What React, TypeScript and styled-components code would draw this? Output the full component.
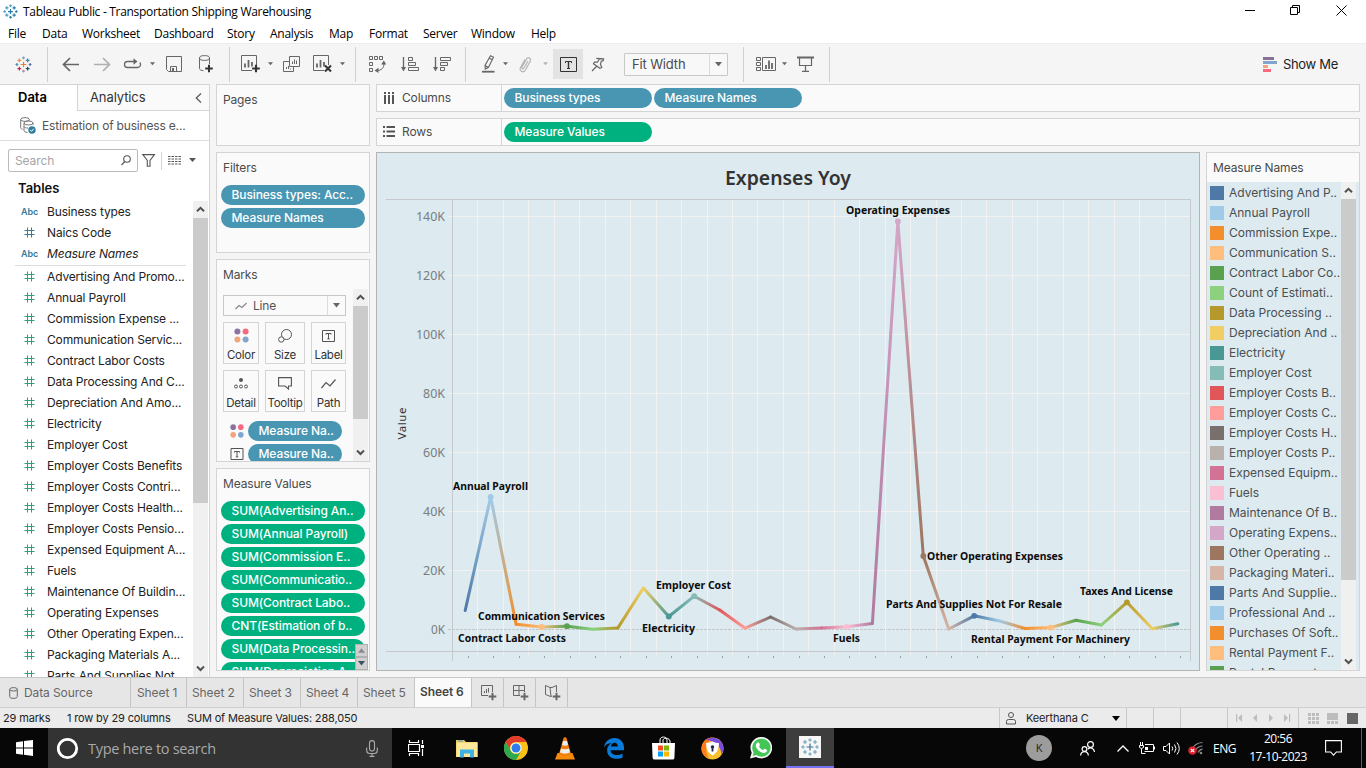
import React from "react";
import styled, { createGlobalStyle, css } from "styled-components";

const UI = `"Inter", "Liberation Sans", sans-serif`;
const WIN = `"Open Sans", "Noto Sans", sans-serif`;

const Global = createGlobalStyle`
  * { box-sizing: border-box; }
  body { margin: 0; background: #f5f5f5; overflow: hidden; }
  svg { display: block; flex: none; }
`;

const Page = styled.div`
  width: 1366px;
  height: 768px;
  display: flex;
  flex-direction: column;
  overflow: hidden;
  font-family: ${UI};
  font-size: 12px;
  color: #333;
  white-space: nowrap;
`;

/* ---------- window chrome ---------- */
const TitleBar = styled.header`
  height: 22px;
  background: #fff;
  display: flex;
  align-items: center;
  padding: 0 19px 0 3px;
  font: 12px/20px ${WIN};
  color: #000;
`;
const TitleText = styled.span`
  margin-left: 5px;
  letter-spacing: -0.3px;
  padding-top: 1px;
`;
const WindowButtons = styled.div`
  margin-left: auto;
  padding-bottom: 1px;
  display: flex;
  gap: 35px;
`;
const MenuBar = styled.nav`
  height: 21px;
  background: #fff;
  display: flex;
  font: 12px/23px ${WIN};
  color: #000;
  padding-left: 8px;
`;
const MenuItem = styled.span<{ $w: number }>`
  width: ${(p) => p.$w}px;
  letter-spacing: -0.25px;
`;

/* ---------- toolbar ---------- */
const Toolbar = styled.div`
  height: 41px;
  background: #f5f5f5;
  border-top: 1px solid #ececec;
  display: flex;
  align-items: center;
  padding-left: 15px;
`;
const Tool = styled.div<{ $w: number; $ml?: number; $on?: boolean }>`
  width: ${(p) => p.$w}px;
  height: 30px;
  margin-left: ${(p) => p.$ml ?? 0}px;
  display: flex;
  align-items: center;
  justify-content: center;
  background: ${(p) => (p.$on ? "#e3e3e3" : "none")};
`;
const ToolSep = styled.i<{ $ml: number }>`
  width: 1px;
  height: 35px;
  background: #d0d0d0;
  margin-left: ${(p) => p.$ml}px;
`;
const FitBox = styled.div`
  width: 104px;
  height: 23px;
  margin-left: 19px;
  border: 1px solid #c8c8c8;
  border-radius: 1px;
  display: flex;
  background: #f8f8f8;
  color: #4a4a4a;
  font-size: 13px;
  line-height: 20px;
  letter-spacing: -0.15px;
`;
const FitLabel = styled.span`
  flex: 1;
  padding-left: 7px;
`;
const CaretCell = styled.span<{ $w: number }>`
  width: ${(p) => p.$w}px;
  border-left: 1px solid #dcdcdc;
  display: flex;
  align-items: center;
  justify-content: center;
`;
const ShowMe = styled.div`
  margin-left: auto;
  margin-right: 28px;
  display: flex;
  align-items: center;
  gap: 6px;
  font-size: 13px;
  letter-spacing: -0.3px;
  color: #222;
`;

/* ---------- workspace ---------- */
const Workspace = styled.div`
  height: 593px;
  display: flex;
  background: #f5f5f5;
`;
const DataPane = styled.aside`
  width: 210px;
  background: #fff;
  border-right: 1px solid #d4d4d4;
  border-top: 1px solid #d4d4d4;
  display: flex;
  flex-direction: column;
`;
const PaneTabs = styled.div`
  height: 26px;
  display: flex;
  font-size: 13px;
  line-height: 25px;
`;
const DataTab = styled.b`
  width: 77px;
  padding-left: 18px;
  color: #000;
  font-weight: 600;
`;
const AnalyticsTab = styled.div`
  flex: 1;
  border-left: 1px solid #d4d4d4;
  border-bottom: 1px solid #d4d4d4;
  background: #fafafa;
  padding: 0 7px 0 12px;
  letter-spacing: -0.1px;
  display: flex;
  justify-content: space-between;
  align-items: center;
`;
const SourceRow = styled.div`
  height: 30px;
  border-bottom: 1px solid #dedede;
  display: flex;
  align-items: center;
  padding: 0 0 1px 20px;
  gap: 6px;
  color: #555;
  font-size: 12px;
  letter-spacing: -0.18px;
`;
const SearchRow = styled.div`
  display: flex;
  align-items: center;
  margin: 8px 0 0 8px;
  height: 23px;
`;
const SearchBox = styled.div`
  width: 130px;
  height: 23px;
  border: 1px solid #bbb;
  border-radius: 2px;
  display: flex;
  align-items: center;
  justify-content: space-between;
  padding: 0 6px;
  color: #a5a5a5;
  font-size: 12px;
  letter-spacing: -0.1px;
`;
const SmallSep = styled.i`
  width: 1px;
  height: 18px;
  background: #d4d4d4;
  margin: 0 6px 0 5px;
`;
const TablesHead = styled.h3`
  margin: 6px 0 3px 18px;
  font-size: 13px;
  line-height: 20px;
  font-weight: 600;
  color: #111;
`;
const ListArea = styled.div`
  flex: 1;
  min-height: 0;
  display: flex;
  justify-content: space-between;
`;
const FieldList = styled.div`
  width: 190px;
  overflow: hidden;
  padding-left: 16px;
`;
const Field = styled.div<{ $italic?: boolean }>`
  height: 21px;
  line-height: 20px;
  display: flex;
  align-items: center;
  font-size: 12px;
  letter-spacing: -0.15px;
  color: #222;
  font-style: ${(p) => (p.$italic ? "italic" : "normal")};
`;
const FieldIcon = styled.span<{ $c: string; $pl?: number }>`
  width: 31px;
  padding-left: ${(p) => p.$pl ?? 8}px;
  color: ${(p) => p.$c};
  font-size: 9px;
  font-weight: 600;
  font-style: normal;
  letter-spacing: -0.1px;
`;
const ListRule = styled.i`
  display: block;
  height: 1px;
  background: #dcdcdc;
  margin: 1px 4px 0 -1px;
`;
const Scroll = styled.div`
  width: 15px;
  margin-right: 1px;
  background: #f0f0f0;
  display: flex;
  flex-direction: column;
  align-items: center;
  flex: none;
`;
const ScrollEnd = styled.span`
  height: 17px;
  display: flex;
  align-items: center;
`;
const Thumb = styled.i<{ $h: number }>`
  height: ${(p) => p.$h}px;
  width: 15px;
  background: #cbcbcb;
  margin-bottom: auto;
`;

/* ---------- cards ---------- */
const Cards = styled.section`
  width: 154px;
  margin-left: 6px;
  display: flex;
  flex-direction: column;
  gap: 6px;
`;
const Card = styled.div<{ $h: number }>`
  height: ${(p) => p.$h}px;
  border: 1px solid #d4d4d4;
  background: #fafafa;
  overflow: hidden;
  position: relative;
`;
const CardTitle = styled.div`
  padding: 5px 0 0 6px;
  line-height: 20px;
  height: 32px;
  font-size: 12px;
  color: #4b4b4b;
  letter-spacing: -0.15px;
`;
const PillStack = styled.div`
  display: flex;
  flex-direction: column;
  gap: 3px;
  padding: 0 4px;
`;
const Pill = styled.div<{ $green?: boolean; $w?: number }>`
  width: ${(p) => (p.$w ? p.$w + "px" : "auto")};
  height: 20px;
  flex: none;
  border-radius: 10px;
  background: ${(p) => (p.$green ? "#00b180" : "#4996b2")};
  color: #fff;
  font-size: 12px;
  line-height: 19px;
  font-weight: 500;
  padding-left: 10.5px;
  letter-spacing: -0.1px;
  overflow: hidden;
`;
const MarksBody = styled.div`
  display: flex;
  justify-content: space-between;
  height: 172px;
  margin-top: -3px;
`;
const MarksMain = styled.div`
  padding: 6px 0 0 6px;
  width: 130px;
`;
const MarkType = styled.div`
  height: 21px;
  width: 123px;
  border: 1px solid #c8c8c8;
  display: flex;
  color: #555;
  line-height: 20px;
  letter-spacing: -0.2px;
`;
const MarkTypeLabel = styled.span`
  flex: 1;
  display: flex;
  align-items: center;
  padding-left: 11px;
  gap: 6px;
`;
const MarkGrid = styled.div`
  display: grid;
  grid-template-columns: 36px 40px 35px;
  gap: 6px;
  margin-top: 6px;
`;
const MarkButton = styled.div`
  height: 42px;
  border: 1px solid #d4d4d4;
  display: flex;
  flex-direction: column;
  align-items: center;
  font-size: 11.5px;
  line-height: 14px;
  letter-spacing: -0.25px;
  color: #333;
`;
const MarkIcon = styled.span`
  height: 25px;
  display: flex;
  align-items: center;
`;
const MarkPills = styled.div`
  margin-top: 9px;
  padding-left: 7px;
  display: flex;
  flex-direction: column;
  gap: 3px;
`;
const MarkPillRow = styled.div`
  display: flex;
  align-items: center;
  gap: 4px;
`;
const Spinner = styled.div`
  position: absolute;
  right: 1px;
  bottom: 0;
  width: 13px;
`;
const SpinButton = styled.span`
  height: 13px;
  background: #d0d0d0;
  border: 1px solid #b0b0b0;
  display: flex;
  align-items: center;
  justify-content: center;
`;

/* ---------- shelves, sheet and legend ---------- */
const Center = styled.main`
  width: 984px;
  margin-left: 6px;
  display: flex;
  flex-direction: column;
  gap: 6px;
`;
const Shelf = styled.div`
  height: 28px;
  border: 1px solid #d4d4d4;
  background: #fafafa;
  display: flex;
  align-items: center;
`;
const ShelfName = styled.div`
  width: 125px;
  height: 100%;
  border-right: 1px solid #d4d4d4;
  display: flex;
  align-items: center;
  gap: 6px;
  padding: 0 0 1px 6px;
  margin-right: 2px;
  color: #4b4b4b;
  letter-spacing: -0.15px;
`;
const ShelfPill = styled(Pill)`
  margin-right: 2px;
`;
const SheetRow = styled.div`
  display: flex;
  gap: 6px;
  height: 519px;
`;
const Sheet = styled.div`
  width: 824px;
  border: 1px solid #b4b4b4;
  background: #ddeaef;
`;
const Legend = styled.div`
  width: 154px;
  border: 1px solid #d4d4d4;
  background: #ddeaef;
  display: flex;
  flex-direction: column;
`;
const LegendTitle = styled.div`
  height: 29px;
  background: #fafafa;
  line-height: 30px;
  padding-left: 6px;
  letter-spacing: -0.15px;
  color: #4b4b4b;
`;
const LegendBody = styled.div`
  flex: 1;
  min-height: 0;
  display: flex;
  justify-content: space-between;
  padding-right: 2px;
`;
const LegendList = styled.div`
  overflow: hidden;
  padding: 1px 0 0 3px;
`;
const LegendItem = styled.div`
  height: 20px;
  display: flex;
  align-items: center;
  gap: 5px;
  line-height: 20px;
  color: #4a4f52;
`;
const Swatch = styled.i<{ $c: string }>`
  width: 14px;
  height: 14px;
  margin-bottom: 1px;
  flex: none;
  background: ${(p) => p.$c};
`;

/* ---------- bottom bars ---------- */
const TabBar = styled.div`
  height: 30px;
  border-top: 1px solid #c8c8c8;
  background: #e6e6e6;
  display: flex;
  color: #666;
  letter-spacing: -0.1px;
`;
const SheetTab = styled.div<{ $w: number; $active?: boolean; $pl?: number }>`
  width: ${(p) => p.$w}px;
  border-right: 1px solid #c4c4c4;
  display: flex;
  align-items: center;
  gap: 6px;
  padding-left: ${(p) => p.$pl ?? 6}px;
  ${(p) =>
    p.$active &&
    css`
      background: #fafafa;
      color: #444;
      font-weight: 600;
      letter-spacing: -0.1px;
      padding-bottom: 2px;
    `}
`;
const StatusBar = styled.div`
  height: 21px;
  border-top: 1px solid #d0d0d0;
  background: #ebebeb;
  display: flex;
  align-items: center;
  font-size: 11px;
  color: #222;
  letter-spacing: -0.15px;
  padding-left: 3px;
`;
const StatusText = styled.span<{ $w: number }>`
  width: ${(p) => p.$w}px;
`;
const StatusCell = styled.div<{ $w: number }>`
  width: ${(p) => p.$w}px;
  height: 20px;
  border-left: 1px solid #c8c8c8;
  display: flex;
  align-items: center;
  justify-content: space-evenly;
`;
const UserCell = styled(StatusCell)`
  margin-left: auto;
  justify-content: flex-start;
  padding-left: 6px;
  gap: 10px;
`;
const UserName = styled.span`
  width: 76px;
`;

const Taskbar = styled.footer`
  height: 40px;
  background: #070707;
  display: flex;
  font-family: ${WIN};
  color: #fff;
`;
const TaskCell = styled.div<{ $w?: number; $active?: boolean }>`
  width: ${(p) => p.$w ?? 48}px;
  margin-right: ${(p) => (p.$w ? 0 : 1)}px;
  height: 40px;
  display: flex;
  align-items: center;
  justify-content: center;
  background: ${(p) => (p.$active ? "#3d3d3d" : "none")};
  border-bottom: ${(p) => (p.$active ? "2px solid #7472f0" : "none")};
`;
const SearchField = styled.div`
  width: 344px;
  background: #333;
  display: flex;
  align-items: center;
  padding: 0 14px 0 8px;
  font-size: 14.5px;
  color: #a9a9a9;
  gap: 9px;
`;
const SearchHint = styled.span`
  flex: 1;
  letter-spacing: -0.3px;
`;
const Tray = styled.div`
  margin-left: auto;
  display: flex;
  align-items: center;
  font-size: 12px;
`;
const Avatar = styled.span`
  width: 26px;
  height: 26px;
  border-radius: 50%;
  background: #9c9c9c;
  color: #222;
  font-size: 11px;
  line-height: 26px;
  text-align: center;
  margin-right: 10px;
`;
const TrayItem = styled.span<{ $w: number }>`
  width: ${(p) => p.$w}px;
  display: flex;
  justify-content: center;
  letter-spacing: -0.5px;
`;
const Clock = styled.span`
  width: 74px;
  text-align: center;
  line-height: 18px;
  letter-spacing: -0.5px;
  margin-right: 10px;
`;
const DesktopEdge = styled.i`
  width: 1px;
  height: 40px;
  background: #5a5a5a;
  margin: 0 4px 0 19px;
`;

/* ---------- icons ---------- */
const Caret = ({ c = "#666", s = 6 }: { c?: string; s?: number }) => (
  <svg width={s} height={s / 2 + 1} viewBox="0 0 8 5">
    <path d="M0 0h8L4 5z" fill={c} />
  </svg>
);

const Chevron = ({ up }: { up?: boolean }) => (
  <svg width="9" height="7" viewBox="0 0 9 7" fill="none" stroke="#505050" strokeWidth="2">
    <path d={up ? "M1 5.3 4.5 1.8 8 5.3" : "M1 1.5 4.5 5 8 1.5"} />
  </svg>
);

const plus = (x: number, y: number, r: number) => `M${x - r} ${y}h${2 * r}M${x} ${y - r}v${2 * r}`;

const TableauMark = ({ size, colors, w = 1.2 }: { size: number; colors: string[]; w?: number }) => {
  const pts: [number, number, number][] = [
    [9, 9, 3], [9, 2, 1.5], [9, 16, 1.5], [2, 9, 1.5], [16, 9, 1.5],
    [4.6, 4.6, 2], [13.4, 4.6, 2], [4.6, 13.4, 2], [13.4, 13.4, 2],
  ];
  return (
    <svg width={size} height={size} viewBox="0 0 18 18" fill="none" strokeWidth={w}>
      {pts.map(([x, y, r], i) => (
        <path key={i} d={plus(x, y, r)} stroke={colors[i % colors.length]} />
      ))}
    </svg>
  );
};

const Hash = () => (
  <svg width="11" height="11" viewBox="0 0 11 11" fill="none" stroke="currentColor" strokeWidth="1">
    <path d="M3.5 .5v10M7.500 .5v10M.5 3.500h10M.5 7.500h10" />
  </svg>
);

const FourDots = ({ s = 15 }: { s?: number }) => (
  <svg width={s} height={s} viewBox="0 0 15 15">
    <circle cx="3.4" cy="3.4" r="3" fill="#8a73a0" />
    <circle cx="11.6" cy="3.4" r="3" fill="#f8697f" />
    <circle cx="3.4" cy="11.6" r="3" fill="#f2a57c" />
    <circle cx="11.6" cy="11.6" r="3" fill="#82a5cd" />
  </svg>
);

const BoxedT = ({ w = 13, h = 12, c = "#555" }: { w?: number; h?: number; c?: string }) => (
  <svg width={w} height={h} viewBox="0 0 13 12" fill="none" stroke={c}>
    <path d="M.5 .5h12v11H.5zM4 4.6V3.5h5v1.1M6.5 3.5v5.5M5.3 8.9h2.4" />
  </svg>
);

const BoxedTLarge = () => (
  <svg width="17" height="15" viewBox="0 0 17 15" fill="none" stroke="#333">
    <path d="M.5 .5h16v14H.5zM5.5 6V4.5h6V6M7 11.5h3" />
    <path d="M8.5 4.5v7" strokeWidth="1.4" />
  </svg>
);

const G = "#666";
const Arrow = ({ c, flip }: { c: string; flip?: boolean }) => (
  <svg width="17" height="15" viewBox="0 0 17 15" fill="none" stroke={c} strokeWidth="1.7">
    <path d={flip ? "M0 7.5h15M9 1l6.5 6.5L9 14" : "M17 7.5H2M8 1 1.5 7.5 8 14"} />
  </svg>
);
const Replay = () => (
  <svg width="19" height="12" viewBox="0 0 19 12" fill="none" stroke={G} strokeWidth="1.3">
    <path d="M12 3.500H4.500a3 3 0 0 0 0 6h10a3 3 0 0 0 2.300-5" />
    <path d="M10.500 .3L14.500 3.500l-4 3.200z" fill={G} stroke="none" />
  </svg>
);
const Save = () => (
  <svg width="16" height="16" viewBox="0 0 16 16" fill="none" stroke={G}>
    <path d="M.5 .5h15v15H2.5l-2-2zM4.5 15v-4.5h6V15" />
    <path d="M6 12h2v3.5H6z" fill={G} stroke="none" />
  </svg>
);
const NewData = () => (
  <svg width="16" height="18" viewBox="0 0 16 18" fill="none" stroke={G}>
    <ellipse cx="6.5" cy="3" rx="5" ry="2.4" />
    <path d="M1.5 3v10.5c0 1.2 1.5 2 4 2.2M11.5 3v6" />
    <path d={plus(11, 13.5, 3.8)} stroke="#333" strokeWidth="2" />
  </svg>
);
const ChartIcon = ({ mode }: { mode: "add" | "clear" }) => (
  <svg width="20" height="18" viewBox="0 0 20 18" fill="none" stroke={G}>
    <path d="M11 15.500H.5V.5h15V10" />
    <path d="M4 8.500v4M7.500 5v7.500M11 7v4.500" strokeWidth="1.8" />
    <path d={mode === "add" ? plus(15, 13.5, 3.8) : "M12 10.500l6 6M18 10.500l-6 6"} stroke="#333" strokeWidth="2.1" />
  </svg>
);
const Duplicate = () => (
  <svg width="17" height="16" viewBox="0 0 17 16" fill="none" stroke={G}>
    <path d="M6.500 .5h10v10h-10zM6.500 5.500h-6v10h10v-5M9.500 8V5.500M11.500 8V3.500M13.500 8V4.500M3.500 13v-2M5.500 13v-3M7.500 13.500v-1" />
  </svg>
);
const Swap = () => (
  <svg width="17" height="17" viewBox="0 0 17 17" fill="none" stroke={G}>
    <path d="M.5 .5h3v3h-3zM5.500 .5h3v3h-3zM10.500 .5h3v3h-3zM.5 6.500h3v3h-3zM.5 12.500h3v3h-3z" />
    <path d="M8 14.500c4.500 0 7-2.500 7-7" />
    <path d="M5.500 14.500l4-2.700v5.200zM14.800 4.500l2.600 4h-5.300z" fill={G} stroke="none" />
  </svg>
);
const Sort = ({ desc }: { desc?: boolean }) => (
  <svg width="18" height="15" viewBox="0 0 18 15" fill="none" stroke={G}>
    <path d="M2.500 0v12" strokeWidth="1.3" />
    <path d="M0 10h5l-2.500 4.500z" fill={G} stroke="none" />
    <path d={desc ? "M7.500 .5h10v3h-10zM7.500 5.500h7v3h-7zM7.500 10.500h4v3h-4z" : "M7.500 .5h4v3h-4zM7.500 5.500h7v3h-7zM7.500 10.500h10v3h-10z"} />
  </svg>
);
const Highlighter = () => (
  <svg width="13" height="18" viewBox="0 0 13 18" fill="none" stroke={G}>
    <path d="M8.500 .8l3 1.500-5 10-3.200 1.800-.3-3.700zM3 10.400l3.500 2M7.400 3.200l3 1.500" strokeWidth="1.1" />
    <path d="M0 16.700h12.500" strokeWidth="1.8" />
  </svg>
);
const Clip = () => (
  <svg width="13" height="17" viewBox="0 0 13 17" fill="none" stroke="#b4b4b4" strokeWidth="1.2">
    <path d="M9 5l-4 7c-.8 1.500-2.800.5-2-1L7.500 3c1.300-2.200 5-.8 3.800 2L6.500 14c-2 3.500-6.800 1-5-2.500L6 3.500" />
  </svg>
);
const PinIcon = () => (
  <svg width="14" height="15" viewBox="0 0 14 15" fill="none" stroke={G} strokeWidth="1.200">
    <path d="M5.300 1.400l7.200.4-.3 1.900-2 .5-.7 3.300 1.300 2.900-1.900.9L2.500 6.700l.9-1.700 3 .2 2-3.200M5.400 9.500L1 14" />
  </svg>
);
const ShowCards = () => (
  <svg width="20" height="15" viewBox="0 0 20 15" fill="none" stroke={G}>
    <path d="M.5 .5h4v3h-4zM.5 5.500h4v3h-4zM.5 10.500h4v3h-4zM6.500 .5h13v13h-13z" />
    <path d="M10 12V8M13 12V3.500M16 12V6" strokeWidth="1.8" />
  </svg>
);
const Present = () => (
  <svg width="17" height="16" viewBox="0 0 17 16" fill="none" stroke={G} strokeWidth="1.2">
    <path d="M0 1.500h17" strokeWidth="2" />
    <path d="M2.500 2v7.500h12V2M8.500 9.500V15M5 15.300h7" />
  </svg>
);
const ShowMeIcon = () => (
  <svg width="14" height="15" viewBox="0 0 14 15">
    <path d="M0 0h11v3H0z" fill="#8a6f99" />
    <path d="M0 4h14v3H0z" fill="#82a5cd" />
    <path d="M0 8h5v3H0z" fill="#f2a57c" />
    <path d="M0 12h8v3H0z" fill="#f8697f" />
  </svg>
);
const SourceIcon = () => (
  <svg width="16" height="17" viewBox="0 0 16 17" fill="none" stroke="#777">
    <ellipse cx="5" cy="2.500" rx="4.300" ry="1.900" />
    <path d="M.7 2.500v8c0 1 1 1.600 2 1.900M9.300 2.500v1" />
    <ellipse cx="8.500" cy="6" rx="4.500" ry="2" />
    <path d="M4 6v7.500c0 1 1.200 1.800 3.500 2M13 6v2M4 9.500c.5 1 1.800 1.500 4 1.600" />
    <circle cx="12" cy="13" r="3.700" fill="#2f7e9f" stroke="none" />
    <path d="M10.300 13l1.200 1.300 2.200-2.500" stroke="#fff" />
  </svg>
);
const Cylinder = () => (
  <svg width="9" height="12" viewBox="0 0 9 12" fill="none" stroke="#666">
    <ellipse cx="4.500" cy="2.300" rx="3.800" ry="1.700" />
    <path d="M.7 2.300v7.300c0 1.100 1.500 1.800 3.800 1.800s3.800-.7 3.800-1.800V2.300" />
  </svg>
);
const TabAdd = ({ d }: { d: string }) => (
  <svg width="16" height="16" viewBox="0 0 16 16" fill="none" stroke={G}>
    <path d={d} />
    <path d={plus(11.500, 11.500, 3.800)} strokeWidth="1.900" />
  </svg>
);

/* ---------- chart ---------- */
const palette = [
  "#4e79a7", "#a0cbe8", "#f28e2b", "#ffbe7d", "#59a14f", "#8cd17d", "#b6992d", "#f1ce63", "#499894", "#86bcb6",
  "#e15759", "#ff9d9a", "#79706e", "#bab0ac", "#d37295", "#fabfd2", "#b07aa1", "#d4a6c8", "#9d7660", "#d7b5a6",
];
const heights = [
  610.5, 497, 624.3, 626.9, 626.2, 629.3, 627.9, 588, 616.5, 596.2, 610, 628.2, 617, 629, 628, 626.8, 623.5, 221.4,
  556, 629, 615.8, 621, 628.5, 627.6, 620.3, 625, 602.3, 628.7, 623.8,
];
const step = 25.45;
const px = (i: number) => 465.2 + step * i;
const marked = [1, 3, 4, 8, 9, 15, 17, 18, 20, 23, 26];
const labels: [string, number, number, number][] = [
  ["Operating Expenses", 846, 214, 104],
  ["Annual Payroll", 453, 490, 75],
  ["Communication Services", 478, 620, 127],
  ["Contract Labor Costs", 458, 642, 108],
  ["Employer Cost", 656, 589, 75],
  ["Electricity", 642, 632, 53],
  ["Fuels", 833, 642, 27],
  ["Other Operating Expenses", 927, 560, 136],
  ["Parts And Supplies Not For Resale", 886, 608, 176],
  ["Rental Payment For Machinery", 971, 643, 159],
  ["Taxes And License", 1080, 595, 93],
];

const Chart = () => (
  <svg width="822" height="517" viewBox="377 153 822 517" fontFamily={`"Noto Sans", "Open Sans", sans-serif`}>
    <g shapeRendering="crispEdges" fill="none">
      {[0, 1, 2, 3, 4, 5, 6, 7].map((k) => (
        <path key={k} d={`M448 ${629.5 - k * 59}H1190`} stroke={k ? "#f3f1f1" : "#c4c8ca"} strokeDasharray={k ? undefined : "3 1"} />
      ))}
      {Array.from({ length: 28 }, (_, k) => (
        <path key={k} d={`M${Math.floor(452.5 + step * (k + 1)) + 0.5} 200V655`} stroke="#f3f1f1" />
      ))}
      <path d="M386 199.500H1191M386 651.500H1191M452.500 199V661M1190.500 199V661" stroke="#c6c9cb" />
      {heights.map((_, i) => (
        <path key={i} d={`M${Math.floor(px(i) + 3) + 0.5} 656v2`} stroke="#9a9fa2" />
      ))}
    </g>
    <text x="725" y="185" fontSize="19.500" fontWeight="600" fill="#333" textLength="126" lengthAdjust="spacingAndGlyphs">Expenses Yoy</text>
    <g fontSize="12.500" fill="#787d80">
      {[0, 1, 2, 3, 4, 5, 6, 7].map((k) => {
        const w = k > 4 ? 29 : k ? 22 : 14;
        return (
          <text key={k} x={445 - w} y={634 - k * 59} textLength={w} lengthAdjust="spacingAndGlyphs">{k * 20}K</text>
        );
      })}
    </g>
    <text transform="translate(405.500 439.500) rotate(-90)" fontSize="11.500" fill="#333" textLength="32">Value</text>
    <defs>
      {heights.slice(1).map((y, i) => (
        <linearGradient key={i} id={`seg${i}`} gradientUnits="userSpaceOnUse" x1={px(i)} y1={heights[i]} x2={px(i + 1)} y2={y}>
          <stop offset="0" stopColor={palette[i % 20]} />
          <stop offset="1" stopColor={palette[(i + 1) % 20]} />
        </linearGradient>
      ))}
    </defs>
    {heights.slice(1).map((y, i) => (
      <path key={i} d={`M${px(i)} ${heights[i]}L${px(i + 1)} ${y}`} stroke={`url(#seg${i})`} strokeWidth="3" strokeLinecap="round" />
    ))}
    {marked.map((i) => (
      <circle key={i} cx={px(i)} cy={heights[i]} r="2.900" fill={palette[i % 20]} />
    ))}
    <g fontSize="11" fontWeight="700" fill="#0c0c0c">
      {labels.map(([t, x, y, w]) => (
        <text key={t} x={x} y={y} textLength={w} lengthAdjust="spacingAndGlyphs">{t}</text>
      ))}
    </g>
  </svg>
);

/* ---------- content ---------- */
const measures = [
  "Advertising And Promo...", "Annual Payroll", "Commission Expense ...", "Communication Servic...", "Contract Labor Costs",
  "Data Processing And C...", "Depreciation And Amo...", "Electricity", "Employer Cost", "Employer Costs Benefits",
  "Employer Costs Contri...", "Employer Costs Health...", "Employer Costs Pensio...", "Expensed Equipment A...", "Fuels",
  "Maintenance Of Buildin...", "Operating Expenses", "Other Operating Expen...", "Packaging Materials A...", "Parts And Supplies Not ...",
];
const legend = [
  "Advertising And P..", "Annual Payroll", "Commission Expe..", "Communication S..", "Contract Labor Co..", "Count of Estimati..",
  "Data Processing ..", "Depreciation And ..", "Electricity", "Employer Cost", "Employer Costs B..", "Employer Costs C..",
  "Employer Costs H..", "Employer Costs P..", "Expensed Equipm..", "Fuels", "Maintenance Of B..", "Operating Expens..",
  "Other Operating ..", "Packaging Materi..", "Parts And Supplie..", "Professional And ..", "Purchases Of Soft..",
  "Rental Payment F..", "Rental Payment ..",
];
const menu: [string, number][] = [
  ["File", 34], ["Data", 40], ["Worksheet", 72], ["Dashboard", 73], ["Story", 43], ["Analysis", 59], ["Map", 40],
  ["Format", 54], ["Server", 48], ["Window", 60], ["Help", 40],
];
const values = [
  "SUM(Advertising An..", "SUM(Annual Payroll)", "SUM(Commission E..", "SUM(Communicatio..", "SUM(Contract Labo..",
  "CNT(Estimation of b..", "SUM(Data Processin..", "SUM(Depreciation A..",
];

const DataPanel = () => (
  <DataPane>
    <PaneTabs>
      <DataTab>Data</DataTab>
      <AnalyticsTab>
        Analytics
        <svg width="7" height="10" viewBox="0 0 7 10" fill="none" stroke="#555" strokeWidth="1.200"><path d="M6 .5L1.200 5 6 9.500" /></svg>
      </AnalyticsTab>
    </PaneTabs>
    <SourceRow><SourceIcon />Estimation of business e...</SourceRow>
    <SearchRow>
      <SearchBox>
        Search
        <svg width="10" height="11" viewBox="0 0 10 11" fill="none" stroke="#555" strokeWidth="1.100"><circle cx="6" cy="4" r="3.300" /><path d="M3.800 6.500L.5 10" /></svg>
      </SearchBox>
      <svg width="18" height="13" viewBox="-4 0 18 13" fill="none" stroke="#555" strokeWidth="1.100"><path d="M.8 .6h11.700L8 6.500v5.800H5.300V6.500z" /></svg>
      <SmallSep />
      <svg width="13" height="10" viewBox="0 0 13 10" stroke="#555" strokeDasharray="2.500 1"><path d="M0 .5h13M0 3h13M0 5.500h13M0 8h13" /></svg>
      <svg width="15" height="5" viewBox="-8 0 15 5"><path d="M0 0h7L3.500 4z" fill="#555" /></svg>
    </SearchRow>
    <TablesHead>Tables</TablesHead>
    <ListArea>
      <FieldList>
        <Field><FieldIcon $c="#3a7b9c" $pl={5}>Abc</FieldIcon>Business types</Field>
        <Field><FieldIcon $c="#3a7b9c"><Hash /></FieldIcon>Naics Code</Field>
        <Field $italic><FieldIcon $c="#3a7b9c" $pl={5}>Abc</FieldIcon>Measure Names</Field>
        <ListRule />
        {measures.map((m) => (
          <Field key={m}><FieldIcon $c="#2fa07a"><Hash /></FieldIcon>{m}</Field>
        ))}
      </FieldList>
      <Scroll><ScrollEnd><Chevron up /></ScrollEnd><Thumb $h={285} /><ScrollEnd><Chevron /></ScrollEnd></Scroll>
    </ListArea>
  </DataPane>
);

const MarksCard = () => (
  <Card $h={203}>
    <CardTitle>Marks</CardTitle>
    <MarksBody>
      <MarksMain>
        <MarkType>
          <MarkTypeLabel>
            <svg width="12" height="8" viewBox="0 0 12 8" fill="none" stroke="#888" strokeWidth="1.200"><path d="M.5 7L4 3.500l3 2L11.500 1" /></svg>
            Line
          </MarkTypeLabel>
          <CaretCell $w={18}><Caret s={7} /></CaretCell>
        </MarkType>
        <MarkGrid>
          <MarkButton><MarkIcon><FourDots /></MarkIcon>Color</MarkButton>
          <MarkButton>
            <MarkIcon><svg width="15" height="14" viewBox="0 0 15 14" fill="none" stroke="#555"><circle cx="8.500" cy="5.500" r="5" /><circle cx="3.300" cy="10.500" r="2.700" fill="#fafafa" /></svg></MarkIcon>
            Size
          </MarkButton>
          <MarkButton><MarkIcon><BoxedT /></MarkIcon>Label</MarkButton>
          <MarkButton>
            <MarkIcon><svg width="14" height="11" viewBox="0 0 14 11" fill="none" stroke="#555"><circle cx="7" cy="2" r="2" fill="#555" stroke="none" /><circle cx="2" cy="8.500" r="1.500" /><circle cx="7" cy="8.500" r="1.500" /><circle cx="12" cy="8.500" r="1.500" /></svg></MarkIcon>
            Detail
          </MarkButton>
          <MarkButton>
            <MarkIcon><svg width="14" height="13" viewBox="0 0 14 13" fill="none" stroke="#555" strokeWidth="1.100"><path d="M.6 .6h12.800v8.400h-2.900v3L7 9H.6z" /></svg></MarkIcon>
            Tooltip
          </MarkButton>
          <MarkButton>
            <MarkIcon><svg width="15" height="10" viewBox="0 0 15 10" fill="none" stroke="#555" strokeWidth="1.200"><path d="M.5 9L5 3.500 9 7l5.500-6.500" /></svg></MarkIcon>
            Path
          </MarkButton>
        </MarkGrid>
        <MarkPills>
          <MarkPillRow><FourDots s={14} /><Pill $w={94}>Measure Na..</Pill></MarkPillRow>
          <MarkPillRow><BoxedT w={14} /><Pill $w={94}>Measure Na..</Pill></MarkPillRow>
        </MarkPills>
      </MarksMain>
      <Scroll><ScrollEnd><Chevron up /></ScrollEnd><Thumb $h={113} /><ScrollEnd><Chevron /></ScrollEnd></Scroll>
    </MarksBody>
  </Card>
);

const TaskApps = () => (
  <>
    <TaskCell>
      <svg width="17" height="16" viewBox="0 0 17 16" fill="none" stroke="#fff"><path d="M1.500 0v2.500h9V0M1.500 16v-2.500h9V16M.5 4.500h11v7H.5zM14.500 0v4M14.500 9v7" strokeWidth="1.200" /><path d="M13 5h3v3h-3z" fill="#fff" stroke="none" /></svg>
    </TaskCell>
    <TaskCell $w={51}>
      <svg width="22" height="19" viewBox="0 0 22 19"><path d="M0 1h8l2 2h11.500v15H0z" fill="#f5c84c" /><path d="M.5 3.500h21V18H.5z" fill="#ffe79b" /><path d="M2 1.500h5v1H2z" fill="#3b9fd8" /><path d="M4 18.500v-8h14v8h-4v-4H8v4z" fill="#3eb4e6" /></svg>
    </TaskCell>
    <TaskCell>
      <svg width="24" height="24" viewBox="0 0 24 24"><circle cx="12" cy="12" r="12" fill="#fbc116" /><path d="M1.600 6A12 12 0 0 1 22.400 6H12a6 6 0 0 0-5.300 9z" fill="#e33b2e" /><path d="M1.600 6A12 12 0 0 0 12 24l5.200-9A6 6 0 0 1 6.800 15z" fill="#2da94f" /><circle cx="12" cy="12" r="5.600" fill="#fff" /><circle cx="12" cy="12" r="4.500" fill="#2f7de9" /></svg>
    </TaskCell>
    <TaskCell>
      <svg width="20" height="23" viewBox="0 0 20 23"><path d="M2.500 16h15l2.500 6.500H0z" fill="#f58a0b" /><path d="M10 0l1.500 1L16 17c-3 2-9 2-12 0L8.500 1z" fill="#f07d0c" /><path d="M8 4h4l1 4c-2 1-4 1-6 0zM6 11.500c2.500 1 5.500 1 8 0l1 4c-3 1.500-7 1.500-10 0z" fill="#eceef0" /></svg>
    </TaskCell>
    <TaskCell>
      <svg width="20" height="21" viewBox="0 0 20 21"><path d="M0 9.500C1 3.500 5 0 10.500 0 16.500 0 20 4.500 20 9.500v2.700H6.600c.2 5.200 7.400 6 12 3.200v4c-6 3.200-15.500 1.200-15.500-7.200 0-3.200 1.900-5.700 4.700-7.100C4 5.300 1.300 7 0 9.500zM6.800 8.400h7c0-4.900-6-4.600-7 0z" fill="#0a7ad9" fillRule="evenodd" /></svg>
    </TaskCell>
    <TaskCell>
      <svg width="23" height="24" viewBox="0 0 23 24"><path d="M8 7V4c0-4 7-4 7 0v3M11 7V4c0-2 6-3 7 1v2" fill="none" stroke="#fff" /><path d="M0 7h23l-.6 15q-.2 1.500-1.800 1.500H2.400Q.8 23.500.6 22z" fill="#fff" /><path d="M6 9.500h5v5H6z" fill="#f25022" /><path d="M12 9.500h5v5h-5z" fill="#7fba00" /><path d="M6 15.500h5v5H6z" fill="#00a4ef" /><path d="M12 15.500h5v5h-5z" fill="#ffb900" /></svg>
    </TaskCell>
    <TaskCell>
      <svg width="23" height="23" viewBox="0 0 23 23"><circle cx="11.500" cy="11.500" r="11" fill="#fbc02d" /><path d="M11 .5A11 11 0 0 0 3 18.500l5 3C3 14 5 6 11 .5z" fill="#ff7a1a" /><path d="M5 3C12-2 22 2 22.500 11c0 3-1 5-2 6.500C20 9 14 4 5 3z" fill="#7a4be0" /><path d="M11.500 4.500q3.500 1.500 6.500 1.500 0 9-6.500 12.500Q5 15 5 6q3 0 6.500-1.500z" fill="#fff" /><path d="M11.500 8.300a1.800 1.800 0 0 1 .9 3.300v3h-1.800v-3a1.800 1.800 0 0 1 .9-3.300z" fill="#26264a" /></svg>
    </TaskCell>
    <TaskCell>
      <svg width="22" height="22" viewBox="0 0 22 22"><path d="M11.300 0A10.700 10.700 0 1 1 6 19.900L0 21.500l1.700-5.800A10.700 10.700 0 0 1 11.300 0z" fill="#f4f7f4" /><path d="M11.300 1.700A9 9 0 1 1 6.300 18l-3.700 1 1-3.600a9 9 0 0 1 7.700-13.700z" fill="#43c656" /><path d="M7.400 5.700c1-.8 1.600-.2 2.400 2 .2.800-1 1.300-.7 1.800 1 1.900 2.200 2.800 3.900 3.500.7.200 1.100-1.500 1.700-1.300 2.600 1.200 2.800 1.300 2.200 2.600-.6 1.400-2.600 2-4.300 1.500-3.500-1-5.900-3.600-6.700-6.300-.4-1.600.3-3 1.500-3.800z" fill="#fff" /></svg>
    </TaskCell>
    <TaskCell $active>
      <svg width="22" height="22" viewBox="0 0 22 22"><path d="M0 0h22v22H0z" fill="#f6f6f6" /><path d={plus(11, 11, 3.500)} stroke="#3a7694" strokeWidth="1.200" /><path d={[plus(11, 4, 1.800), plus(11, 18, 1.800), plus(4, 11, 1.800), plus(18, 11, 1.800), plus(6, 6, 2), plus(16, 6, 2), plus(6, 16, 2), plus(16, 16, 2)].join("")} stroke="#6fa3bd" strokeWidth="1.100" /></svg>
    </TaskCell>
  </>
);

export default function App() {
  return (
    <Page>
      <Global />
      <TitleBar>
        <TableauMark size={15} colors={["#2a7ea8", "#4e9cc0"]} w={1.500} />
        <TitleText>Tableau Public - Transportation Shipping Warehousing</TitleText>
        <WindowButtons>
          <svg width="10" height="11" viewBox="0 0 10 11"><path d="M0 5.500h10" stroke="#000" /></svg>
          <svg width="11" height="11" viewBox="0 0 11 11" fill="none" stroke="#000"><path d="M.5 2.500h7v7h-7zM2.500 2.500V.5h7v7h-2" /></svg>
          <svg width="11" height="11" viewBox="0 0 11 11" stroke="#000"><path d="M.5 .5l10 10M10.500 .5l-10 10" /></svg>
        </WindowButtons>
      </TitleBar>
      <MenuBar>{menu.map(([t, w]) => <MenuItem key={t} $w={w}>{t}</MenuItem>)}</MenuBar>
      <Toolbar>
        <Tool $w={17}><TableauMark size={17} colors={["#e8803a", "#7aa0c4", "#a890a8", "#4f8da8", "#5b76a8", "#e8924c", "#3f87a0", "#c02c48", "#2b4778"]} w={1.300} /></Tool>
        <ToolSep $ml={15} />
        <Tool $w={18} $ml={13}><Arrow c={G} /></Tool>
        <Tool $w={18} $ml={14}><Arrow c="#b0b0b0" flip /></Tool>
        <Tool $w={19} $ml={12}><Replay /></Tool>
        <Tool $w={6} $ml={7}><Caret s={5} /></Tool>
        <Tool $w={16} $ml={11}><Save /></Tool>
        <Tool $w={16} $ml={16}><NewData /></Tool>
        <ToolSep $ml={15} />
        <Tool $w={20} $ml={11}><ChartIcon mode="add" /></Tool>
        <Tool $w={6} $ml={6}><Caret s={5} /></Tool>
        <Tool $w={17} $ml={10}><Duplicate /></Tool>
        <Tool $w={20} $ml={13}><ChartIcon mode="clear" /></Tool>
        <Tool $w={6} $ml={6}><Caret s={5} /></Tool>
        <ToolSep $ml={10} />
        <Tool $w={17} $ml={13}><Swap /></Tool>
        <Tool $w={18} $ml={15}><Sort /></Tool>
        <Tool $w={18} $ml={14}><Sort desc /></Tool>
        <ToolSep $ml={14} />
        <Tool $w={13} $ml={16}><Highlighter /></Tool>
        <Tool $w={6} $ml={7}><Caret s={5} /></Tool>
        <Tool $w={13} $ml={11}><Clip /></Tool>
        <Tool $w={6} $ml={10}><Caret s={5} c="#b4b4b4" /></Tool>
        <Tool $w={30} $ml={5} $on><BoxedTLarge /></Tool>
        <Tool $w={14} $ml={8}><PinIcon /></Tool>
        <FitBox><FitLabel>Fit Width</FitLabel><CaretCell $w={18}><Caret s={7} /></CaretCell></FitBox>
        <ToolSep $ml={15} />
        <Tool $w={20} $ml={12}><ShowCards /></Tool>
        <Tool $w={6} $ml={5}><Caret s={5} /></Tool>
        <Tool $w={17} $ml={10}><Present /></Tool>
        <ToolSep $ml={15} />
        <ShowMe><ShowMeIcon />Show Me</ShowMe>
      </Toolbar>

      <Workspace>
        <DataPanel />
        <Cards>
          <Card $h={62}><CardTitle>Pages</CardTitle></Card>
          <Card $h={101}>
            <CardTitle>Filters</CardTitle>
            <PillStack><Pill>Business types: Acc..</Pill><Pill>Measure Names</Pill></PillStack>
          </Card>
          <MarksCard />
          <Card $h={203}>
            <CardTitle>Measure Values</CardTitle>
            <PillStack>{values.map((v) => <Pill key={v} $green>{v}</Pill>)}</PillStack>
            <Spinner>
              <SpinButton><svg width="7" height="5" viewBox="0 0 8 5"><path d="M0 5h8L4 0z" fill="#888" /></svg></SpinButton>
              <SpinButton><Caret c="#3f4f63" s={7} /></SpinButton>
            </Spinner>
          </Card>
        </Cards>
        <Center>
          <Shelf>
            <ShelfName>
              <svg width="13" height="12" viewBox="0 0 13 12" stroke="#555" strokeWidth="2"><path d="M2 0v2M6 0v2M10 0v2M2 3v9M6 3v9M10 3v9" /></svg>
              Columns
            </ShelfName>
            <ShelfPill $w={148}>Business types</ShelfPill>
            <ShelfPill $w={148}>Measure Names</ShelfPill>
          </Shelf>
          <Shelf>
            <ShelfName>
              <svg width="13" height="11" viewBox="0 0 13 11" stroke="#555" strokeWidth="2"><path d="M0 1h2M0 5.500h2M0 10h2M3.500 1H12M3.500 5.500H12M3.500 10H12" /></svg>
              Rows
            </ShelfName>
            <ShelfPill $green $w={148}>Measure Values</ShelfPill>
          </Shelf>
          <SheetRow>
            <Sheet><Chart /></Sheet>
            <Legend>
              <LegendTitle>Measure Names</LegendTitle>
              <LegendBody>
                <LegendList>
                  {legend.map((t, i) => <LegendItem key={t}><Swatch $c={palette[i % 20]} />{t}</LegendItem>)}
                </LegendList>
                <Scroll><ScrollEnd><Chevron up /></ScrollEnd><Thumb $h={381} /><ScrollEnd><Chevron /></ScrollEnd></Scroll>
              </LegendBody>
            </Legend>
          </SheetRow>
        </Center>
      </Workspace>

      <TabBar>
        <SheetTab $w={131} $pl={9}><Cylinder />Data Source</SheetTab>
        <SheetTab $w={56}>Sheet 1</SheetTab>
        <SheetTab $w={57} $pl={5}>Sheet 2</SheetTab>
        <SheetTab $w={57} $pl={5}>Sheet 3</SheetTab>
        <SheetTab $w={57} $pl={5}>Sheet 4</SheetTab>
        <SheetTab $w={57} $pl={5}>Sheet 5</SheetTab>
        <SheetTab $w={57} $pl={5} $active>Sheet 6</SheetTab>
        <SheetTab $w={32} $pl={9}><TabAdd d="M7 10.500H.5V.5h11V7M3.500 8V6M5.500 8V4M7.500 7.500V3" /></SheetTab>
        <SheetTab $w={32} $pl={9}><TabAdd d="M7 10.500H.5V.5h11V7M6 .5v10M.5 5.500h11" /></SheetTab>
        <SheetTab $w={32} $pl={9}><TabAdd d="M7 11L5.500 11.500.5 9.500V.5L5 2.500 6 11.500M5 2.500h2L11.500.5V7" /></SheetTab>
      </TabBar>
      <StatusBar>
        <StatusText $w={64}>29 marks</StatusText>
        <StatusText $w={120}>1 row by 29 columns</StatusText>
        <StatusText $w={200}>SUM of Measure Values: 288,050</StatusText>
        <UserCell $w={127}>
          <svg width="10" height="13" viewBox="0 0 10 13" fill="none" stroke="#555"><circle cx="5" cy="3" r="2.500" /><path d="M.5 12V9.500q0-2 2-2h5q2 0 2 2V12z" /></svg>
          <UserName>Keerthana C</UserName>
          <Caret c="#000" s={8} />
        </UserCell>
        <StatusCell $w={27} />
        <StatusCell $w={27} />
        <StatusCell $w={47} />
        <StatusCell $w={71}>
          <svg width="55" height="8" viewBox="0 0 55 8" fill="#bdbdbd"><path d="M0 0h1.200v8H0zM6 0v8L2 4zM21 0v8l-4-4zM33 0l4 4-4 4zM48 0l4 4-4 4zM53 0h1.200v8H53z" /></svg>
        </StatusCell>
        <StatusCell $w={68}>
          <svg width="11" height="11" viewBox="0 0 11 11" fill="#bdbdbd"><path d="M0 0h3v3H0zM4 0h3v3H4zM8 0h3v3H8zM0 4h3v3H0zM4 4h3v3H4zM8 4h3v3H8zM0 8h3v3H0zM4 8h3v3H4zM8 8h3v3H8z" /></svg>
          <svg width="11" height="11" viewBox="0 0 11 11" fill="#bdbdbd"><path d="M0 0h11v7H0zM0 8h3v3H0zM4 8h3v3H4zM8 8h3v3H8z" /></svg>
          <svg width="11" height="11" viewBox="0 0 11 11"><path d="M0 0h11v11H0z" fill="#666" /></svg>
        </StatusCell>
      </StatusBar>

      <Taskbar>
        <TaskCell $w={48}>
          <svg width="17" height="16" viewBox="0 0 17 16" fill="#fff"><path d="M0 2.200l7-1v6.300H0zM8 1l9-1v7.500H8zM0 8.500h7v6.300l-7-1zM8 8.500h9V16l-9-1.200z" /></svg>
        </TaskCell>
        <SearchField>
          <svg width="23" height="23" viewBox="0 0 23 23" fill="none" stroke="#fff"><circle cx="11.500" cy="11.500" r="9.200" strokeWidth="2.800" /></svg>
          <SearchHint>Type here to search</SearchHint>
          <svg width="12" height="17" viewBox="0 0 12 17" fill="none" stroke="#aaa" strokeWidth="1.100"><rect x="3.500" y=".6" width="5" height="10.500" rx="2.500" /><path d="M.7 7.500v3q0 3 3 3h4.600q3 0 3-3v-3M6 13.500v3M3.500 16.400h5" /></svg>
        </SearchField>
        <TaskApps />
        <Tray>
          <Avatar>K</Avatar>
          <TrayItem $w={50}>
            <svg width="15" height="15" viewBox="0 0 15 15" fill="none" stroke="#fff" strokeWidth="1.200"><circle cx="10.500" cy="3.500" r="2.900" /><circle cx="4.500" cy="8" r="2.400" /><path d="M.6 14.500c.4-5.300 7.300-5.300 7.800 0M8 8c2.500-2 6-1 6.500 3" /></svg>
          </TrayItem>
          <TrayItem $w={22}><svg width="12" height="7" viewBox="0 0 12 7" fill="none" stroke="#fff" strokeWidth="1.300"><path d="M.5 6.500L6 1l5.500 5.500" /></svg></TrayItem>
          <TrayItem $w={26}><svg width="16" height="12" viewBox="0 0 16 12" fill="none" stroke="#fff"><path d="M6 2.500h8.500v7H5.500M15.500 4.500v3M1.500 0v3M3.500 0v3M.5 3.500h4v2q-2 2-4 0zM2.500 7v4.500h4" /><path d="M6 5h3v3H6z" fill="#fff" stroke="none" /></svg></TrayItem>
          <TrayItem $w={22}><svg width="17" height="13" viewBox="0 0 17 13" fill="none" stroke="#fff"><path d="M.5 4.500h2.500L6.500 1v11L3 8.500H.5zM9 4.500q1.500 2 0 4M11.500 2.500q3 4 0 8M14 .5q4.500 6 0 12" /></svg></TrayItem>
          <TrayItem $w={26}><svg width="15" height="14" viewBox="0 0 15 14" fill="none" stroke="#888"><path d="M4 8.500Q6.500 2 14.500 1.500M7 10q2-4.500 7.500-5M10 11.500q1.500-3 4.500-3.300" strokeWidth="1.200" /><circle cx="13" cy="12" r="1.300" fill="#888" stroke="none" /><circle cx="4.500" cy="9.500" r="4.300" fill="#dc1f2d" stroke="none" /><path d="M2.800 7.800l3.400 3.400M6.200 7.800l-3.400 3.400" stroke="#fff" strokeWidth="1.200" /></svg></TrayItem>
          <TrayItem $w={33}>ENG</TrayItem>
          <Clock>20:56<br />17-10-2023</Clock>
          <svg width="17" height="16" viewBox="0 0 17 16" fill="none" stroke="#fff" strokeWidth="1.100"><path d="M.6 .6h15.800v11.400h-5L8.500 15.200 5.600 12h-5z" /></svg>
          <DesktopEdge />
        </Tray>
      </Taskbar>
    </Page>
  );
}
